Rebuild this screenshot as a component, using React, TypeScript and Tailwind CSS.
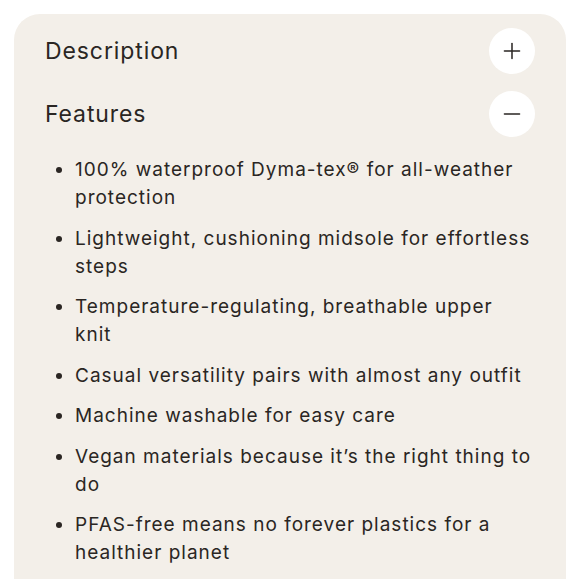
import { Minus, Plus } from 'lucide-react';

const FEATURES = [
  '100% waterproof Dyma-tex® for all-weather protection',
  'Lightweight, cushioning midsole for effortless steps',
  'Temperature-regulating, breathable upper knit',
  'Casual versatility pairs with almost any outfit',
  'Machine washable for easy care',
  'Vegan materials because it’s the right thing to do',
  'PFAS-free means no forever plastics for a healthier planet',
];

function Toggle({ open }: { open: boolean }) {
  return (
    <span className="flex items-center justify-center w-[46px] h-[46px] rounded-full bg-white text-[#2a2623]">
      {open ? <Minus size={26} strokeWidth={1.4} /> : <Plus size={26} strokeWidth={1.4} />}
    </span>
  );
}

export default function App() {
  return (
    <div className="h-[579px] overflow-hidden bg-white pt-[14px] px-[14px] font-['Inter',sans-serif] text-[#2a2623]">
      <div className="bg-[#f3efe9] rounded-t-[26px] px-[31px] pt-[14px] pb-[40px]">
        <div className="flex items-center justify-between h-[46px]">
          <span className="text-[23px] tracking-[0.9px]">Description</span>
          <Toggle open={false} />
        </div>
        <div className="flex items-center justify-between h-[46px] mt-[17px]">
          <span className="text-[23px] tracking-[0.9px]">Features</span>
          <Toggle open />
        </div>
        <ul className="mt-[19px] pl-[30px] list-disc flex flex-col gap-[12.5px]">
          {FEATURES.map((item) => (
            <li key={item} className="text-[19px] leading-[28px] tracking-[1px]">
              {item}
            </li>
          ))}
        </ul>
      </div>
    </div>
  );
}
